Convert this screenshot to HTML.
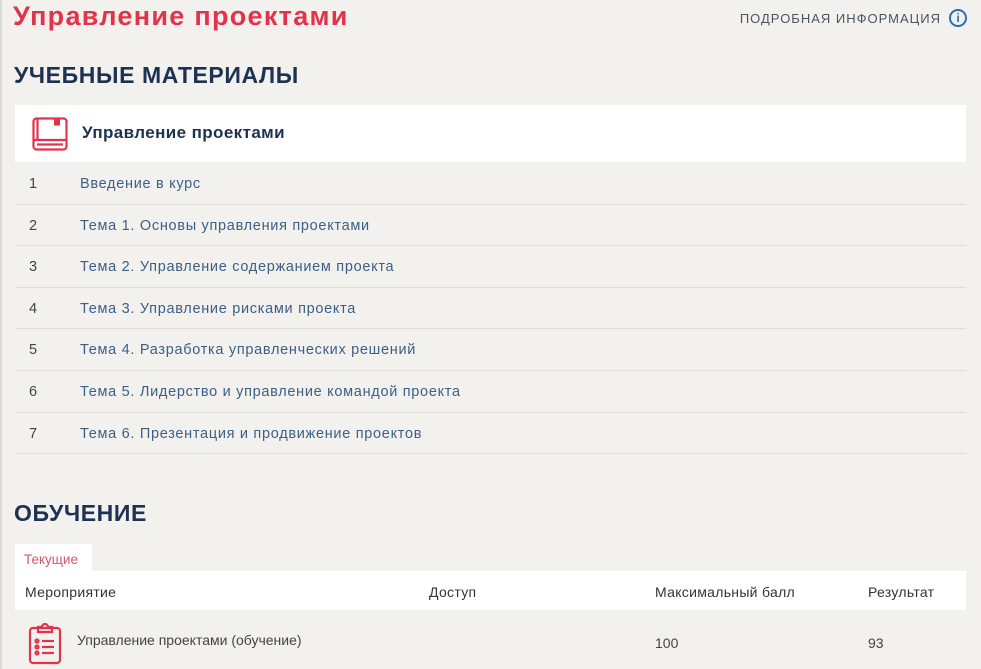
<!DOCTYPE html>
<html><head><meta charset="utf-8"><style>
*{margin:0;padding:0;box-sizing:border-box}
body{width:981px;height:669px;overflow:hidden;background:#f2f1ee;font-family:"Liberation Sans",sans-serif;position:relative}
.edge{position:absolute;left:0;top:0;width:2px;height:669px;background:#dcdad6}
.abs{position:absolute}
h1{position:absolute;left:13px;top:1px;font-size:27px;font-weight:bold;color:#e2334c;letter-spacing:1.3px}
.info{position:absolute;right:14px;top:9px;font-size:13px;color:#4a5461;display:flex;align-items:center;letter-spacing:1px}
.info span.i{display:inline-block;width:18px;height:18px;border:2px solid #2d6db5;border-radius:50%;color:#2d6db5;font-weight:bold;font-size:12px;text-align:center;line-height:14px;margin-left:8px;letter-spacing:0}
h2{position:absolute;left:14px;font-size:23px;font-weight:bold;color:#1d3152;letter-spacing:0.6px}
.card{position:absolute;left:15px;top:105px;width:951px;height:57px;background:#fff}
.card .t{position:absolute;left:67px;top:18px;font-size:17px;font-weight:bold;color:#1d3152;letter-spacing:0.4px}
.rows{position:absolute;left:15px;top:163px;width:951px}
.row{height:41.6px;border-bottom:1px solid #e0dedb;position:relative;font-size:14.5px;letter-spacing:0.7px}
.row .n{position:absolute;left:14px;top:13px;color:#444}
.row .l{position:absolute;left:65px;top:13px;color:#3d5f86}
.tab{position:absolute;left:15px;top:544px;width:77px;height:28px;background:#fff;color:#d9546a;font-size:13.5px;padding:8px 0 0 9px}
.th{position:absolute;left:15px;top:571px;width:951px;height:39px;background:#fff;font-size:14px;color:#333;letter-spacing:0.3px}
.th div,.tr div{position:absolute;top:13px}
.tr{position:absolute;left:15px;top:611px;width:951px;height:58px;font-size:14px;color:#444}
.tr div{top:24px}
</style></head><body>
<div class="edge"></div>
<h1>Управление проектами</h1>
<div class="info">ПОДРОБНАЯ ИНФОРМАЦИЯ <span class="i">i</span></div>
<h2 style="top:62px">УЧЕБНЫЕ МАТЕРИАЛЫ</h2>
<div class="card">
<svg class="abs" style="left:17px;top:12px" width="36" height="34" viewBox="0 0 36 34" fill="none" stroke="#e2334c" stroke-width="2.2"><rect x="1.5" y="1.5" width="33" height="31" rx="3"/><line x1="1.5" y1="23" x2="34.5" y2="23"/><line x1="5" y1="27.5" x2="31" y2="27.5"/><line x1="5.5" y1="23" x2="5.5" y2="1.5"/><rect x="22" y="1.5" width="6" height="7" fill="#e2334c" stroke="none"/></svg>
<div class="t">Управление проектами</div></div>
<div class="rows">
<div class="row"><span class="n">1</span><span class="l">Введение в курс</span></div>
<div class="row"><span class="n">2</span><span class="l">Тема 1. Основы управления проектами</span></div>
<div class="row"><span class="n">3</span><span class="l">Тема 2. Управление содержанием проекта</span></div>
<div class="row"><span class="n">4</span><span class="l">Тема 3. Управление рисками проекта</span></div>
<div class="row"><span class="n">5</span><span class="l">Тема 4. Разработка управленческих решений</span></div>
<div class="row"><span class="n">6</span><span class="l">Тема 5. Лидерство и управление командой проекта</span></div>
<div class="row"><span class="n">7</span><span class="l">Тема 6. Презентация и продвижение проектов</span></div>
</div>
<h2 style="top:500px">ОБУЧЕНИЕ</h2>
<div class="tab">Текущие</div>
<div class="th"><div style="left:10px">Мероприятие</div><div style="left:414px">Доступ</div><div style="left:640px">Максимальный балл</div><div style="left:853px">Результат</div></div>
<div class="tr">
<svg class="abs" style="left:13px;top:10px" width="34" height="44" viewBox="0 0 34 44" fill="none" stroke="#e2334c" stroke-width="2.2"><rect x="2" y="7" width="30" height="35" rx="3"/><path d="M10 11 V6 H14 A3 3 0 0 1 20 6 H24 V11 Z"/><circle cx="9" cy="20" r="1.5"/><circle cx="9" cy="26" r="1.5"/><circle cx="9" cy="32" r="1.5"/><line x1="14" y1="20" x2="26" y2="20"/><line x1="14" y1="26" x2="26" y2="26"/><line x1="14" y1="32" x2="26" y2="32"/></svg>
<div style="left:62px;top:21px">Управление проектами (обучение)</div><div style="left:640px">100</div><div style="left:853px">93</div></div>
</body></html>
